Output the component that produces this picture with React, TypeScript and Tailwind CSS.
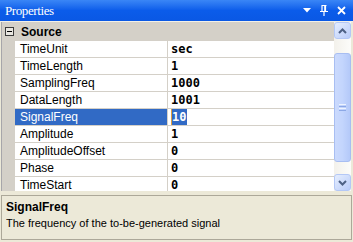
import React from "react";

type Row = { name: string; value: string; selected?: boolean };

const rows: Row[] = [
  { name: "TimeUnit", value: "sec" },
  { name: "TimeLength", value: "1" },
  { name: "SamplingFreq", value: "1000" },
  { name: "DataLength", value: "1001" },
  { name: "SignalFreq", value: "10", selected: true },
  { name: "Amplitude", value: "1" },
  { name: "AmplitudeOffset", value: "0" },
  { name: "Phase", value: "0" },
  { name: "TimeStart", value: "0" },
];

const sans = "font-['Liberation_Sans',Arial,sans-serif]";
const mono = "font-['DejaVu_Sans_Mono',monospace]";

function ScrollButton({ up }: { up?: boolean }) {
  return (
    <div className="h-[17px] w-[17px] rounded-[3px] border border-[#B4C8F6] bg-gradient-to-br from-[#E6EEFE] to-[#B9CCF9] flex items-center justify-center">
      <svg width="9" height="6" viewBox="0 0 9 6">
        <path
          d={up ? "M1 5 L4.5 1.5 L8 5" : "M1 1 L4.5 4.5 L8 1"}
          fill="none"
          stroke="#4D6185"
          strokeWidth="2"
        />
      </svg>
    </div>
  );
}

function Scrollbar() {
  return (
    <div className="w-[17px] h-full flex flex-col bg-gradient-to-r from-[#F3F1EB] to-[#FCFCFA]">
      <ScrollButton up />
      <div className="h-[14px]" />
      <div className="h-[109px] rounded-[3px] border border-[#A8BEF2] bg-gradient-to-r from-[#CBDAFD] via-[#C3D5FD] to-[#B4C9F9] flex flex-col items-center justify-center gap-px">
        <div className="w-[7px] h-px bg-[#EEF4FE]" />
        <div className="w-[7px] h-px bg-[#8CA8E6]" />
        <div className="w-[7px] h-px bg-[#EEF4FE]" />
        <div className="w-[7px] h-px bg-[#8CA8E6]" />
      </div>
      <div className="flex-1" />
      <ScrollButton />
    </div>
  );
}

export default function App() {
  return (
    <div className="w-[353px] h-[242px] bg-[#ECE9D8] overflow-hidden flex flex-col">
      <div className="h-[21px] flex items-center justify-between pl-[5px] pr-[7px] bg-gradient-to-b from-[#3A86F6] via-[#0B5CEA] to-[#0A58E4]">
        <span className="font-['Liberation_Serif',serif] text-[13px] tracking-[-0.4px] text-white leading-none">
          Properties
        </span>
        <div className="flex items-center gap-[9px]">
          <svg width="8" height="5" viewBox="0 0 8 5">
            <path d="M0 0 H8 L4 4.5 Z" fill="white" />
          </svg>
          <svg width="8" height="11" viewBox="0 0 8 11">
            <path d="M1.5 0.5 H6.5 M2 0.5 V6 M5.5 0.5 V6 M0 6.5 H8 M4 6.5 V11" stroke="white" strokeWidth="1.2" fill="none" />
            <rect x="4.2" y="0.5" width="1.3" height="5.5" fill="white" />
          </svg>
          <svg width="9" height="9" viewBox="0 0 9 9">
            <path d="M1 1 L8 8 M8 1 L1 8" stroke="white" strokeWidth="1.8" />
          </svg>
        </div>
      </div>
      <div className="h-px bg-[#F2F0E8]" />
      <div className="h-[169px] flex ml-px mr-[2px] border-l border-[#A7A6AA]">
        <div className="flex-1 flex flex-col overflow-hidden bg-white">
          <div className="h-[19px] shrink-0 bg-[#D4D0C8] flex items-center">
            <div className="w-[9px] h-[9px] ml-[3px] border border-[#3C3C3C] bg-[#E8E6E0] flex items-center justify-center">
              <div className="w-[5px] h-px bg-black" />
            </div>
            <span className={`${sans} ml-[7px] text-[12px] font-bold text-black leading-none`}>
              Source
            </span>
          </div>
          {rows.map((r) => (
            <div key={r.name} className="h-[17px] shrink-0 flex">
              <div className="w-[13px] bg-[#D4D0C8]" />
              <div
                className={`w-[153px] border-r border-b border-[#D4D0C8] pl-[5px] flex items-center ${sans} text-[12px] leading-none ${
                  r.selected ? "bg-[#316AC5] text-white" : "text-black"
                }`}
              >
                {r.name}
              </div>
              <div className={`flex-1 border-b border-[#D4D0C8] pl-[3px] flex items-center ${mono} text-[12px] font-bold leading-none text-black`}>
                {r.selected ? (
                  <span className="bg-[#316AC5] text-white border-l border-[#E0A040] pr-px py-[2px]">
                    {r.value}
                  </span>
                ) : (
                  r.value
                )}
              </div>
            </div>
          ))}
        </div>
        <Scrollbar />
      </div>
      <div className="h-[4px]" />
      <div className="h-[45px] mx-px mr-[1px] border border-[#ACA899] bg-[#ECE9D8] px-[4px] pt-[4px] flex flex-col gap-[3px]">
        <span className={`${sans} text-[12px] font-bold text-black leading-[14px]`}>SignalFreq</span>
        <span className={`${sans} text-[11px] text-black leading-[13px]`}>
          The frequency of the to-be-generated signal
        </span>
      </div>
    </div>
  );
}
